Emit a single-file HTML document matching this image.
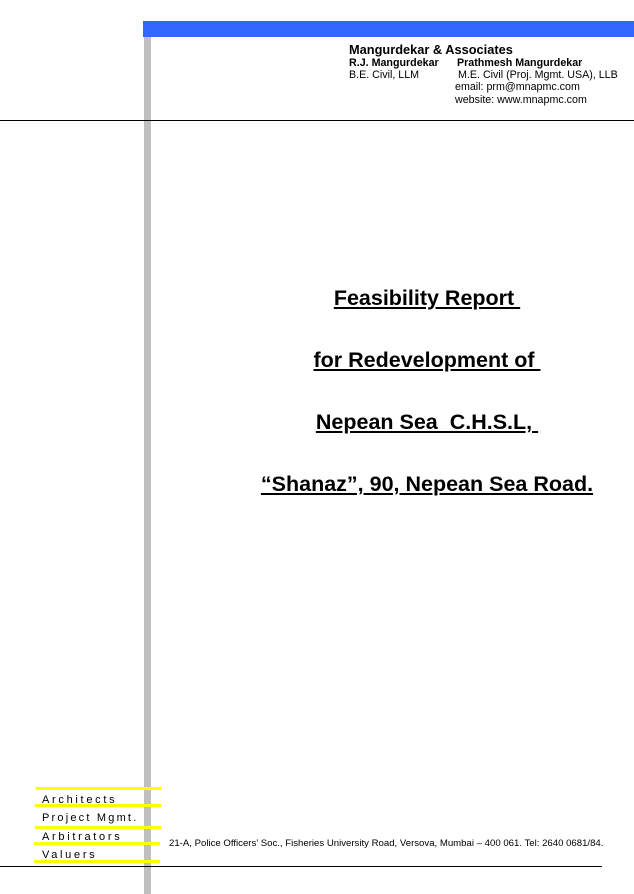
<!DOCTYPE html>
<html><head><style>
body{margin:0;width:634px;height:894px;position:relative;background:#fff;font-family:"Liberation Sans",Arial,sans-serif;overflow:hidden}
.a{position:absolute;white-space:nowrap}
.y{position:absolute;height:3px;background:#ffff00}
.t{position:absolute;left:200px;width:454px;text-align:center;font-weight:bold;font-size:21.5px;text-decoration:underline;white-space:pre}
.l{position:absolute;left:42px;font-size:11px;letter-spacing:2.7px;color:#000;line-height:13px}
</style></head><body>
<div class="a" style="left:143px;top:21px;width:491px;height:16px;background:#3366ff"></div>
<div class="a" style="left:144px;top:37px;width:7px;height:857px;background:#c0c0c0"></div>
<div class="a" style="left:0;top:120px;width:634px;height:1px;background:#000"></div>
<div class="a" style="left:0;top:866px;width:602px;height:1px;background:#000"></div>
<div class="a" style="left:349px;top:42px;font-size:12.8px;font-weight:bold">Mangurdekar &amp; Associates</div>
<div class="a" style="left:349px;top:57px;font-size:10.7px;font-weight:bold">R.J. Mangurdekar</div>
<div class="a" style="left:457px;top:57px;font-size:10.7px;font-weight:bold">Prathmesh Mangurdekar</div>
<div class="a" style="left:349px;top:69px;font-size:10.7px">B.E. Civil, LLM</div>
<div class="a" style="left:458px;top:69px;font-size:10.7px">M.E. Civil (Proj. Mgmt. USA), LLB</div>
<div class="a" style="left:455px;top:81px;font-size:10.7px">email: prm@mnapmc.com</div>
<div class="a" style="left:455px;top:94px;font-size:10.7px">website: www.mnapmc.com</div>
<div class="t" style="top:286px">Feasibility Report </div>
<div class="t" style="top:348px">for Redevelopment of </div>
<div class="t" style="top:410px">Nepean Sea  C.H.S.L, </div>
<div class="t" style="top:472px">“Shanaz”, 90, Nepean Sea Road.</div>
<div class="y" style="left:36px;top:787px;width:125px"></div>
<div class="y" style="left:35px;top:804px;width:126px"></div>
<div class="y" style="left:35px;top:826px;width:126px"></div>
<div class="y" style="left:34px;top:842px;width:126px"></div>
<div class="y" style="left:34px;top:860px;width:126px"></div>
<div class="l" style="top:794px">Architects</div>
<div class="l" style="top:812px;letter-spacing:2.2px">Project Mgmt.</div>
<div class="l" style="top:831px">Arbitrators</div>
<div class="l" style="top:849px">Valuers</div>
<div class="a" style="left:169px;top:838px;font-size:9.6px">21-A, Police Officers’ Soc., Fisheries University Road, Versova, Mumbai – 400 061. Tel: 2640 0681/84.</div>
</body></html>
